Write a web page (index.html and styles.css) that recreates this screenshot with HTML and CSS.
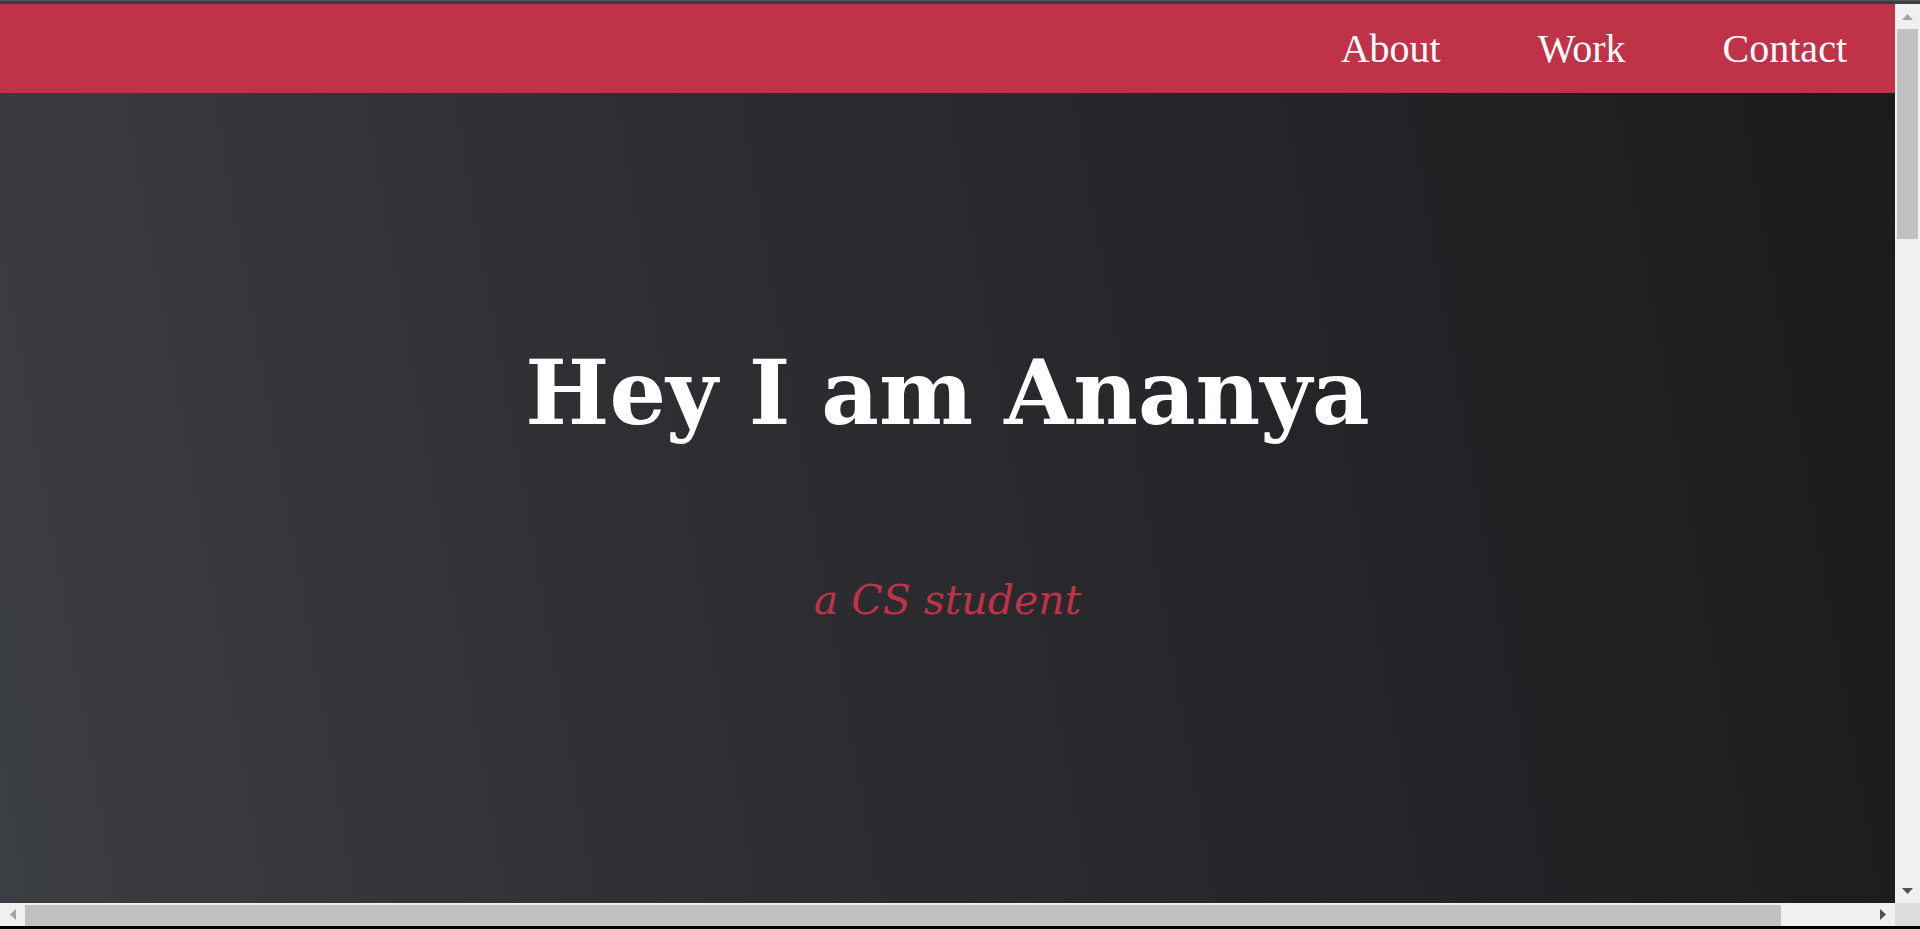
FILE: index.html
```html
<!DOCTYPE html>
<html lang="en">
<head>
<meta charset="utf-8">
<title>Ananya</title>
<link rel="stylesheet" href="styles.css">
</head>
<body>
<div class="window">
  <div class="topstrip"></div>
  <main class="page">
    <header class="navbar">
      <nav class="nav">
        <a class="nav-link" href="#about">About</a>
        <a class="nav-link" href="#work">Work</a>
        <a class="nav-link" href="#contact">Contact</a>
      </nav>
    </header>
    <section class="hero">
      <h1 class="hero-title">Hey I am Ananya</h1>
      <p class="hero-sub">a CS student</p>
    </section>
  </main>
  <div class="vscroll">
    <div class="sb-btn"><svg width="11" height="6" viewBox="0 0 11 6"><polygon points="0,6 11,6 5.5,0" class="arrow-dim"/></svg></div>
    <div class="vthumb"></div>
    <div class="sb-fill"></div>
    <div class="sb-btn"><svg width="11" height="6" viewBox="0 0 11 6"><polygon points="0,0 11,0 5.5,6" class="arrow-dark"/></svg></div>
  </div>
  <div class="hscroll">
    <div class="sb-btn"><svg width="6" height="11" viewBox="0 0 6 11"><polygon points="6,0 6,11 0,5.5" class="arrow-dim"/></svg></div>
    <div class="hthumb"></div>
    <div class="sb-fill"></div>
    <div class="sb-btn"><svg width="6" height="11" viewBox="0 0 6 11"><polygon points="0,0 0,11 6,5.5" class="arrow-dark"/></svg></div>
  </div>
  <div class="corner"></div>
  <div class="bottomstrip"></div>
</div>
</body>
</html>
```

FILE: styles.css
```css
html, body {
  margin: 0;
  padding: 0;
  width: 100%;
  height: 100%;
  overflow: hidden;
  background: #000;
}

.window {
  display: grid;
  grid-template-columns: 1fr 25px;
  grid-template-rows: 4px 1fr 23px 3px;
  width: 1920px;
  height: 929px;
}

.topstrip {
  grid-column: 1 / 3;
  background: #3c3e42;
  border-top: 1px solid #55575b;
  box-sizing: border-box;
}

.page {
  grid-column: 1;
  grid-row: 2;
  display: flex;
  flex-direction: column;
  background: linear-gradient(80deg, #3b3e42 0%, #2e2f33 35%, #1b1b1d 100%);
  overflow: hidden;
}

.navbar {
  height: 89px;
  flex: none;
  background: #bf3248;
  display: flex;
  justify-content: flex-end;
  align-items: center;
  padding-right: 48px;
}

.nav {
  display: flex;
  gap: 97px;
}

.nav-link {
  font-family: "Liberation Serif", "Times New Roman", serif;
  font-size: 40px;
  line-height: 1;
  color: #ffffff;
  text-decoration: none;
}

.hero {
  display: flex;
  flex-direction: column;
  align-items: center;
  text-align: center;
}

.hero-title {
  margin: 255px 0 0;
  font-family: "DejaVu Serif", Georgia, serif;
  font-weight: bold;
  font-size: 89px;
  line-height: 1;
  color: #ffffff;
}

.hero-sub {
  margin: 143px 0 0;
  font-family: "DejaVu Serif", Georgia, serif;
  font-style: italic;
  font-size: 41px;
  line-height: 1;
  color: #bf3248;
}

.vscroll {
  grid-column: 2;
  grid-row: 2;
  background: #f0f0f0;
  display: flex;
  flex-direction: column;
}

.hscroll {
  grid-column: 1;
  grid-row: 3;
  background: #f0f0f0;
  display: flex;
  flex-direction: row;
}

.sb-btn {
  flex: none;
  width: 25px;
  height: 25px;
  display: flex;
  align-items: center;
  justify-content: center;
}

.hscroll .sb-btn {
  height: 23px;
}

.sb-fill {
  flex: 1;
}

.vthumb {
  flex: none;
  height: 210px;
  margin: 0 2px 0 2px;
  background: #c1c1c1;
}

.hthumb {
  flex: none;
  width: 1756px;
  margin: 2px 0 0 0;
  background: #c1c1c1;
}

.arrow-dim {
  fill: #a3a3a3;
}

.arrow-dark {
  fill: #505050;
}

.corner {
  grid-column: 2;
  grid-row: 3;
  background: #dcdcdc;
}

.bottomstrip {
  grid-column: 1 / 3;
  grid-row: 4;
  background: #000000;
}
```
